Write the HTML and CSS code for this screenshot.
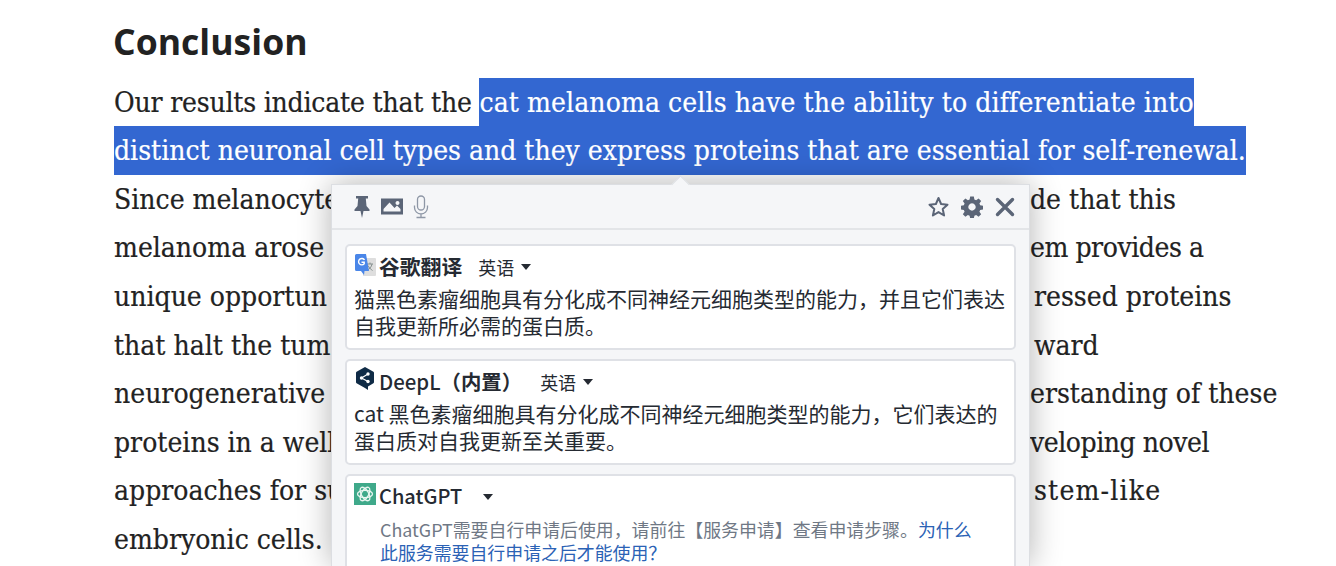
FILE: index.html
```html
<!DOCTYPE html>
<html>
<head>
	<title>Conclusion</title>
	<link rel="stylesheet" href="styles.css">
</head>
<body>
	<main class="article">
		<h2 class="heading">Conclusion</h2>
		<div class="line"><span class="narrow-s">Our results indicate that the </span><span class="sel wide-s">cat melanoma cells have the ability to differentiate into</span></div>
		<div class="line"><span class="sel">distinct neuronal cell types and they express proteins that are essential for self-renewal.</span></div>
		<div class="line split"><span class="left">Since melanocyte</span><span class="right">de that this</span></div>
		<div class="line split"><span class="left">melanoma arose</span><span class="right narrow">em provides a</span></div>
		<div class="line split"><span class="left">unique opportun</span><span class="right inset">ressed proteins</span></div>
		<div class="line split"><span class="left">that halt the tum</span><span class="right inset">ward</span></div>
		<div class="line split"><span class="left">neurogenerative</span><span class="right">erstanding of these</span></div>
		<div class="line split"><span class="left">proteins in a well</span><span class="right narrow">veloping novel</span></div>
		<div class="line split"><span class="left">approaches for su</span><span class="right inset wide">stem-like</span></div>
		<div class="line">embryonic cells.</div>
	</main>

	<div class="popup">
		<div class="arrow"></div>
		<div class="toolbar">
			<div class="tools tools-left">
				<svg width="18" height="24" viewBox="0 0 18 24"><path fill="#5b6577" d="M3 1h12v2.500h-2.200l.7 7.500 3 3.500v1.500h-6L9 23l-1.500-7h-6v-1.500l3-3.500.7-7.500H3z"/></svg>
				<svg width="22" height="17" viewBox="0 0 22 17"><path fill="#5b6577" fill-rule="evenodd" d="M0 .5h22v16H0zM2.500 13.500h17v-2.500l-3.500-3.500-2.500 2.500-5-5.500-6 6.500zM16.500 3a2 2 0 1 0 .01 0z"/></svg>
				<svg width="16" height="24" viewBox="0 0 16 24"><g fill="none" stroke="#8e97a6" stroke-width="1.300"><rect x="4.500" y="1" width="7" height="14" rx="3.500"/><path d="M1.500 10.500v2a6.500 6.500 0 0 0 13 0v-2M8 19v3M3.500 22.500h9"/></g></svg>
			</div>
			<div class="tools">
				<svg width="21" height="22" viewBox="0 0 21 22"><path fill="none" stroke="#5b6577" stroke-width="2" stroke-linejoin="round" d="M10.500 2l2.600 6 6.400.7-4.800 4.300 1.400 6.500-5.600-3.400-5.600 3.400 1.400-6.500L1.500 8.700 7.900 8z"/></svg>
				<svg width="22" height="22" viewBox="0 0 24 24"><path fill="#5b6577" fill-rule="evenodd" d="M10 .5h4l.6 3.200 1.900.8 2.700-1.900 2.800 2.800-1.900 2.700.8 1.900 3.100.6v4l-3.100.6-.8 1.900 1.900 2.700-2.800 2.800-2.700-1.900-1.900.8-.6 3.100h-4l-.6-3.100-1.900-.8-2.700 1.900-2.800-2.800 1.900-2.700-.8-1.900-3.100-.6v-4l3.100-.6.800-1.900-1.900-2.700 2.800-2.800 2.700 1.900 1.900-.8zM12 8a4 4 0 1 0 .01 0z"/></svg>
				<svg width="20" height="20" viewBox="0 0 20 20"><path stroke="#5b6577" stroke-width="3.400" stroke-linecap="round" d="M2.500 2.500l15 15M17.500 2.500l-15 15"/></svg>
			</div>
		</div>
		<div class="results">
			<section class="card">
				<div class="card-head">
					<svg class="logo logo-google" width="21" height="23" viewBox="0 0 21 23"><path fill="#dedede" d="M8 4h12a1 1 0 0 1 1 1v16a1 1 0 0 1-1 1H8z"/><path fill="none" stroke="#86908f" stroke-width="1" d="M12 10h6M15 8.500v1.500M17 10c-.5 3-2.500 5-5 6.500M13 11.500c1 2 2.500 3.500 4.500 5"/><path fill="#4a86e8" d="M1.500 0H11l3 17H9.500L9 21l-3-4H1.500A1.500 1.500 0 0 1 0 15.500v-14A1.500 1.500 0 0 1 1.500 0z"/><path fill="none" stroke="#fff" stroke-width="1.400" d="M9.500 6a3.200 3.200 0 1 0-.3 3.800V8.300H6.500"/></svg>
					<span class="name name-google">谷歌翻译</span>
					<span class="lang">英语</span><i class="caret"></i>
				</div>
				<p class="result">猫黑色素瘤细胞具有分化成不同神经元细胞类型的能力，并且它们表达<br>自我更新所必需的蛋白质。</p>
			</section>
			<section class="card">
				<div class="card-head">
					<svg class="logo logo-deepl" width="18" height="23" viewBox="0 0 18 23"><path fill="#0f2b46" d="M9 0l8 4.500a1.500 1.500 0 0 1 1 1.300v9.400a1.500 1.500 0 0 1-1 1.300l-5 2.900V23l-3-2-8-4.500a1.500 1.500 0 0 1-1-1.300V5.800a1.500 1.500 0 0 1 1-1.300z"/><g fill="#fff"><circle cx="5.500" cy="11" r="1.700"/><circle cx="12" cy="7" r="1.700"/><circle cx="12" cy="14.500" r="1.700"/></g><path fill="none" stroke="#fff" stroke-width="1.200" d="M12 7l-6.500 4 6.500 3.500"/></svg>
					<span class="name name-deepl">DeepL<b>（内置）</b></span>
					<span class="lang">英语</span><i class="caret"></i>
				</div>
				<p class="result">cat 黑色素瘤细胞具有分化成不同神经元细胞类型的能力，它们表达的<br>蛋白质对自我更新至关重要。</p>
			</section>
			<section class="card">
				<div class="card-head">
					<svg class="logo logo-gpt" width="22" height="22" viewBox="0 0 22 22"><rect width="22" height="22" fill="#3fa98a"/><g fill="none" stroke="#e8f5f0" stroke-width="1.300"><ellipse cx="11" cy="11" rx="7.500" ry="3.600"/><ellipse cx="11" cy="11" rx="7.500" ry="3.600" transform="rotate(60 11 11)"/><ellipse cx="11" cy="11" rx="7.500" ry="3.600" transform="rotate(120 11 11)"/></g></svg>
					<span class="name name-gpt">ChatGPT</span>
					<i class="caret"></i>
				</div>
				<p class="notice">ChatGPT需要自行申请后使用，请前往【服务申请】查看申请步骤。<a class="link" href="#">为什么<br>此服务需要自行申请之后才能使用？</a></p>
			</section>
		</div>
	</div>
</body>
</html>
```

FILE: styles.css
```css
html, body {
	height: 566px;
	overflow: hidden;
}

body {
	margin: 0;
	background: #fff;
	color: #222;
}

.article {
	padding: 14px 0 0 114px;
	font-family: "DejaVu Serif Condensed", "DejaVu Serif", serif;
	font-size: 28px;
	-webkit-text-stroke: .2px;
}

.heading {
	margin: 0 0 9.6px -1px;
	font-family: "Open Sans", sans-serif;
	font-size: 35.600px;
	line-height: 54px;
	font-weight: 700;
	-webkit-text-stroke: 0;
}

.line {
	height: 48.6px;
	line-height: 50.6px;
	white-space: nowrap;
}

.split {
	display: grid;
	grid-template-columns: 217px 699px auto;
}

.left {
	overflow: hidden;
}

.right {
	grid-column: 3;
}

.inset {
	padding-left: 4px;
}

.narrow {
	letter-spacing: -.45px;
}

.wide {
	letter-spacing: 1.2px;
}

.narrow-s {
	letter-spacing: -.2px;
}

.wide-s {
	letter-spacing: .1px;
}

.sel {
	display: inline-block;
	height: 48.6px;
	vertical-align: top;
	background: #3367d1;
	color: #fff;
}

.popup {
	position: absolute;
	left: 331px;
	top: 184px;
	width: 699px;
	height: 382px;
	background: #f5f6f8;
	border: 1px solid #dcdee2;
	border-bottom: 0;
	box-sizing: border-box;
	box-shadow: 0 0 30px rgba(0, 0, 0, .3);
	font-family: "Noto Sans CJK SC", "Noto Sans", sans-serif;
	color: #252a32;
}

.arrow {
	position: absolute;
	left: 342px;
	top: -7px;
	width: 12px;
	height: 12px;
	background: #f5f6f8;
	border-top: 1px solid #dcdee2;
	border-left: 1px solid #dcdee2;
	transform: rotate(45deg);
}

.toolbar {
	display: flex;
	justify-content: space-between;
	align-items: center;
	height: 43px;
	padding: 0 14px 0 21px;
	border-bottom: 2px solid #e3e5e8;
}

.tools {
	display: flex;
	align-items: center;
	gap: 12px;
}

.tools-left {
	gap: 10px;
}

.results {
	display: flex;
	flex-direction: column;
	gap: 9px;
	padding: 14px 13px 0;
}

.card {
	background: #fff;
	border: 2px solid #dfe1e6;
	border-radius: 5px;
	padding: 6px 7px 9px;
}

.card-head {
	display: flex;
	align-items: flex-start;
	height: 33px;
}

.logo {
	flex: none;
}

.logo-google {
	margin: 2px 3px 0 1px;
}

.logo-deepl {
	margin: 0 5px 0 2px;
}

.logo-gpt {
	margin: 1px 3px 0 0;
}

.name {
	line-height: 28px;
	font-weight: 500;
	margin-right: 16px;
}

.name-google {
	font-size: 20.800px;
	font-weight: 700;
}

.name-deepl {
	font-size: 20.400px;
	margin-right: 18px;
}

.name-gpt {
	font-size: 20px;
	margin-right: 21px;
}

.lang {
	font-size: 18px;
	line-height: 30px;
	margin-right: 7px;
}

.caret {
	margin-top: 12px;
	width: 0;
	height: 0;
	border: 5px solid transparent;
	border-top: 6px solid #252a32;
	border-bottom: 0;
}

.result {
	margin: 0;
	font-size: 21px;
	line-height: 27px;
	white-space: nowrap;
}

.notice {
	margin: 3px 0 0 26px;
	font-size: 17.900px;
	line-height: 23px;
	color: #6f7885;
	white-space: nowrap;
}

.link {
	color: #2b62b5;
	text-decoration: none;
}
```
